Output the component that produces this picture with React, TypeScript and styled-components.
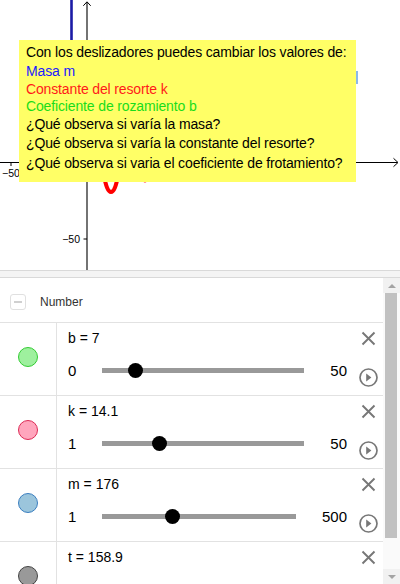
import React from 'react';
import styled, { createGlobalStyle } from 'styled-components';

const GlobalStyle = createGlobalStyle`
  html, body {
    margin: 0;
    padding: 0;
    background: #fff;
  }
  body {
    font-family: "Liberation Sans", Arial, sans-serif;
    overflow: hidden;
  }
  * {
    box-sizing: border-box;
  }
`;

type Slider = {
  name: string;
  value: number;
  min: number;
  max: number;
  fill: string;
  stroke: string;
  folded?: boolean;
};

const sliders: Slider[] = [
  { name: 'b', value: 7, min: 0, max: 50, fill: '#9ef09e', stroke: '#33cc33' },
  { name: 'k', value: 14.1, min: 1, max: 50, fill: '#ffa6bd', stroke: '#dd2a55' },
  { name: 'm', value: 176, min: 1, max: 500, fill: '#9bc5dc', stroke: '#3b7fc0' },
  // last row is scrolled below the fold, only its title shows
  { name: 't', value: 158.9, min: 0, max: 200, fill: '#999999', stroke: '#444444', folded: true },
];

const Page = styled.div`
  width: 400px;
  height: 584px;
  display: flex;
  flex-direction: column;
  overflow: hidden;
`;

/* ---------- graphics view ---------- */

const Graphics = styled.div`
  position: relative;
  flex: none;
  height: 270px;
  overflow: hidden;
`;

const Canvas = styled.svg`
  display: block;
  font-family: "Liberation Sans", Arial, sans-serif;
`;

const InfoBox = styled.div`
  position: absolute;
  left: 19px;
  top: 40px;
  width: 337px;
  height: 142px;
  padding: 2px 0 0 7px;
  background: #ffff66;
  font-family: "Liberation Sans", Arial, sans-serif;
  font-size: 14px;
  letter-spacing: -0.14px;
`;

const InfoLine = styled.div<{ $color?: string; $lh: number }>`
  color: ${p => p.$color ?? '#000'};
  line-height: ${p => p.$lh}px;
  white-space: nowrap;
`;

const GraphDrawing = () => (
  <Canvas width="400" height="270" viewBox="0 0 400 270">
    {/* blue mass line */}
    <line x1="71.5" y1="0" x2="71.5" y2="60" stroke="#1b1ba6" strokeWidth="2.6" />
    <line x1="357" y1="71" x2="357" y2="84" stroke="#5b9be0" strokeWidth="1.4" />
    {/* axes */}
    <line x1="0" y1="162.5" x2="397.5" y2="162.5" stroke="#000" strokeWidth="1.1" />
    <polyline points="393.5,158.3 398,162.5 393.5,166.7" fill="none" stroke="#000" strokeWidth="1" />
    <line x1="87" y1="2" x2="87" y2="270" stroke="#000" strokeWidth="1.1" />
    <polyline points="83.3,5.8 87,1.8 90.7,5.8" fill="none" stroke="#000" strokeWidth="1" />
    <line x1="11" y1="162.5" x2="11" y2="166" stroke="#000" strokeWidth="1" />
    <line x1="83.5" y1="239" x2="87" y2="239" stroke="#000" strokeWidth="1" />
    <text x="11" y="176.5" fontSize="10.5" textAnchor="middle">−50</text>
    <text x="80" y="242.8" fontSize="10.5" textAnchor="end">−50</text>
    {/* red oscillation */}
    <path d="M104,176 C106,186 108,192 111,192 C114,192 116,186 118,176" fill="none" stroke="#ff0000" strokeWidth="4" strokeLinecap="round" />
    <path d="M143,178 C144,182 146,182 147,178" fill="none" stroke="#ff0000" strokeWidth="3" />
  </Canvas>
);

/* ---------- splitter ---------- */

const Splitter = styled.div`
  flex: none;
  height: 8px;
  background: #f4f4f4;
  border-top: 1px solid #d9d9d9;
  border-bottom: 1px solid #d9d9d9;
`;

/* ---------- algebra view ---------- */

const Algebra = styled.div`
  flex: 1;
  min-height: 0;
  display: flex;
`;

const List = styled.div`
  flex: 1;
  min-width: 0;
  overflow: hidden;
`;

const GroupHeader = styled.div`
  height: 45px;
  padding: 4px 0 0 10px;
  display: flex;
  align-items: center;
  gap: 14px;
  border-bottom: 1px solid #e2e2e2;
  font-size: 12px;
  color: #333;
`;

const CollapseBox = styled.div`
  width: 16px;
  height: 16px;
  border: 1px solid #e0e0e0;
  border-radius: 3px;
  display: flex;
  align-items: center;
  justify-content: center;

  &::after {
    content: '';
    width: 8px;
    height: 2px;
    background: #d0d0d0;
  }
`;

const Row = styled.div`
  height: 73px;
  display: flex;
  border-bottom: 1px solid #e2e2e2;
`;

const MarbleCell = styled.div`
  width: 57px;
  flex: none;
  border-right: 1px solid #e2e2e2;
  display: flex;
  align-items: center;
  justify-content: center;
  padding-bottom: 4px;
`;

const Marble = styled.div<{ $fill: string; $stroke: string }>`
  width: 20px;
  height: 20px;
  border-radius: 50%;
  background: ${p => p.$fill};
  border: 1px solid ${p => p.$stroke};
`;

const Content = styled.div`
  flex: 1;
  min-width: 0;
  padding: 0 5px 8px 11px;
  display: flex;
  flex-direction: column;
`;

const ItemHeader = styled.div`
  height: 30px;
  display: flex;
  align-items: center;
  justify-content: space-between;
  font-size: 14px;
  color: #000;
`;

const IconSlot = styled.div`
  width: 19px;
  height: 19px;
  flex: none;
  display: flex;
  align-items: center;
  justify-content: center;
`;

const SliderLine = styled.div`
  height: 34px;
  display: flex;
  align-items: center;
  font-size: 15px;
  color: #000;
`;

const MinLabel = styled.span`
  width: 34px;
  flex: none;
`;

const MaxLabel = styled.span`
  margin: 0 12px 0 26px;
`;

const Track = styled.div`
  position: relative;
  flex: 1;
  height: 5px;
  background: #999;
`;

const Knob = styled.div`
  position: absolute;
  top: 50%;
  width: 15px;
  height: 15px;
  margin: -7.5px 0 0 -7.5px;
  border-radius: 50%;
  background: #000;
`;

const PlaySlot = styled(IconSlot)`
  align-self: flex-end;
`;

const CloseIcon = () => (
  <svg width="15" height="15" viewBox="0 0 15 15">
    <path d="M1.5 1.5 L13.5 13.5 M13.5 1.5 L1.5 13.5" stroke="#777" strokeWidth="1.9" />
  </svg>
);

const PlayIcon = () => (
  <svg width="19" height="19" viewBox="0 0 19 19">
    <circle cx="9.5" cy="9.5" r="8.5" fill="none" stroke="#777" strokeWidth="1.7" />
    <path d="M7.2 5.6 L12.4 9.5 L7.2 13.4 Z" fill="#777" />
  </svg>
);

const SliderItem = ({ s }: { s: Slider }) => {
  const frac = (s.value - s.min) / (s.max - s.min);
  return (
    <Row>
      <MarbleCell>
        <Marble $fill={s.fill} $stroke={s.stroke} />
      </MarbleCell>
      <Content>
        <ItemHeader>
          <span>
            {s.name} = {s.value}
          </span>
          <IconSlot>
            <CloseIcon />
          </IconSlot>
        </ItemHeader>
        {!s.folded && (
          <SliderLine>
            <MinLabel>{s.min}</MinLabel>
            <Track>
              <Knob style={{ left: `calc(7.5px + ${frac} * (100% - 15px))` }} />
            </Track>
            <MaxLabel>{s.max}</MaxLabel>
            <PlaySlot>
              <PlayIcon />
            </PlaySlot>
          </SliderLine>
        )}
      </Content>
    </Row>
  );
};

/* ---------- scrollbar ---------- */

const ScrollBar = styled.div`
  width: 17px;
  flex: none;
  display: flex;
  flex-direction: column;
  background: #fafafa;
`;

const ArrowButton = styled.div<{ $down?: boolean }>`
  height: 15px;
  flex: none;
  display: flex;
  align-items: center;
  justify-content: center;
  background: #f1f1f1;

  &::after {
    content: '';
    border-left: 4px solid transparent;
    border-right: 4px solid transparent;
    ${p =>
      p.$down ? 'border-top: 4px solid #a3a3a3;' : 'border-bottom: 4px solid #a3a3a3;'}
  }
`;

const ScrollTrack = styled.div`
  flex: 1;
  padding: 0 3px 0 2px;
`;

const Thumb = styled.div`
  height: 245px;
  background: #c1c1c1;
`;

export default function App() {
  return (
    <Page>
      <GlobalStyle />
      <Graphics>
        <GraphDrawing />
        <InfoBox>
          <InfoLine $lh={20}>Con los deslizadores puedes cambiar los valores de:</InfoLine>
          <InfoLine $lh={18.5} $color="#1a1aff">Masa m</InfoLine>
          <InfoLine $lh={17} $color="#ff1a1a">Constante del resorte k</InfoLine>
          <InfoLine $lh={17} $color="#1add1a">Coeficiente de rozamiento b</InfoLine>
          <InfoLine $lh={18.5}>¿Qué observa si varía la masa?</InfoLine>
          <InfoLine $lh={20}>¿Qué observa si varía la constante del resorte?</InfoLine>
          <InfoLine $lh={20}>¿Qué observa si varia el coeficiente de frotamiento?</InfoLine>
        </InfoBox>
      </Graphics>
      <Splitter />
      <Algebra>
        <List>
          <GroupHeader>
            <CollapseBox />
            <span>Number</span>
          </GroupHeader>
          {sliders.map(s => (
            <SliderItem key={s.name} s={s} />
          ))}
        </List>
        <ScrollBar>
          <ArrowButton />
          <ScrollTrack>
            <Thumb />
          </ScrollTrack>
          <ArrowButton $down />
        </ScrollBar>
      </Algebra>
    </Page>
  );
}
